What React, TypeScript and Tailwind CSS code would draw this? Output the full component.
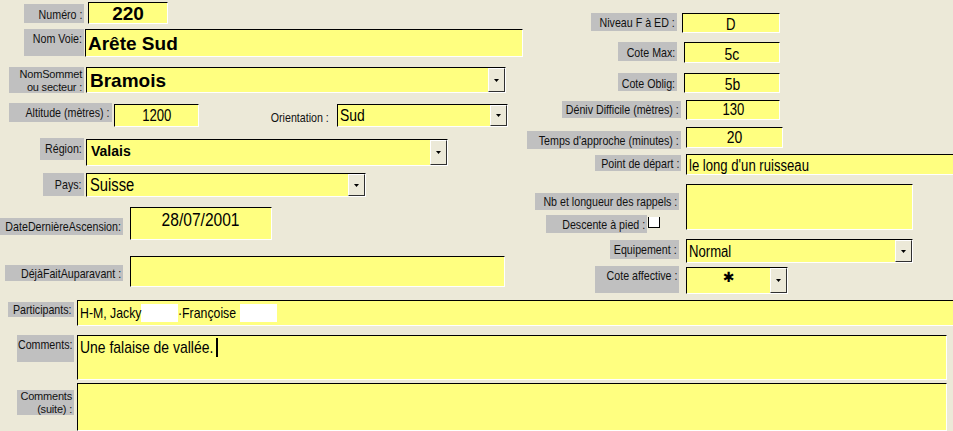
import React from "react";

const SANS = "font-['Liberation_Sans',Arial,sans-serif]";

function Label({ cls, children }: { cls: string; children: React.ReactNode }) {
  return (
    <div
      className={`shrink-0 flex justify-end items-start bg-[#C0C0C0] text-right text-[13px] leading-[13px] pr-[2px] text-[#111] whitespace-nowrap ${cls}`}
    >
      <span className="inline-block origin-right scale-x-[0.82]">{children}</span>
    </div>
  );
}

function Label2({ cls, children }: { cls: string; children: React.ReactNode }) {
  return (
    <div
      className={`shrink-0 bg-[#C0C0C0] text-right text-[11px] leading-[13px] pr-[2px] text-[#111] whitespace-nowrap tracking-[-0.2px] ${cls}`}
    >
      {children}
    </div>
  );
}

function DropBtn() {
  return (
    <div className="shrink-0 w-[17px] h-full bg-[#ECE9D8] border-t border-l border-t-white border-l-white border-r border-b border-r-[#303030] border-b-[#303030] flex items-center justify-center">
      <svg width="5" height="3" viewBox="0 0 5 3">
        <polygon points="0,0 5,0 2.5,3" fill="#000" />
      </svg>
    </div>
  );
}

function Box({
  cls,
  inner,
  combo,
  children,
}: {
  cls: string;
  inner?: string;
  combo?: boolean;
  children?: React.ReactNode;
}) {
  return (
    <div
      className={`shrink-0 flex bg-[#FFFF80] border-t border-l border-t-black border-l-black border-b border-r border-b-white border-r-white overflow-hidden ${cls}`}
    >
      <div className={`flex-1 min-w-0 flex whitespace-nowrap text-black ${inner ?? ""}`}>{children}</div>
      {combo && <DropBtn />}
    </div>
  );
}

function NL({ children }: { children: React.ReactNode }) {
  return <span className="inline-block origin-left scale-x-[0.82]">{children}</span>;
}

function NC({ children }: { children: React.ReactNode }) {
  return <span className="inline-block origin-center scale-x-[0.82]">{children}</span>;
}

export default function App() {
  return (
    <div className={`w-[953px] h-[431px] bg-[#ECE9D8] overflow-hidden flex flex-col ${SANS}`}>
      <div className="h-[296px] flex shrink-0">
        {/* LEFT COLUMN */}
        <div className="w-[525px] shrink-0 flex flex-col">
          <div className="h-[29px] flex items-start">
            <Label cls="ml-[24px] mt-[4px] w-[60px] h-[19px] pt-[4px]">Numéro :</Label>
            <Box cls="ml-[4px] mt-[2px] w-[80px] h-[22px]" inner="justify-center items-center font-bold text-[19px] leading-none">
              220
            </Box>
          </div>
          <div className="h-[38px] flex items-start">
            <Label cls="ml-[24px] w-[60px] h-[27px] pt-[3px] pr-[1px]">Nom Voie:</Label>
            <Box cls="ml-[1px] w-[438px] h-[28px]" inner="items-center pl-[2px] font-bold text-[19px] leading-none">
              Arête Sud
            </Box>
          </div>
          <div className="h-[36px] flex items-start">
            <Label2 cls="ml-[9px] w-[75px] h-[26px] pt-[1px]">
              NomSommet
              <br />
              ou secteur :
            </Label2>
            <Box combo cls="ml-[2px] w-[420px] h-[26px]" inner="items-center pl-[3px] font-bold text-[19px] leading-none">
              Bramois
            </Box>
          </div>
          <div className="h-[35px] flex items-start">
            <Label cls="ml-[9px] w-[103px] h-[19px] pt-[3px]">Altitude (mètres) :</Label>
            <Box cls="ml-[2px] mt-[1px] w-[85px] h-[23px]" inner="justify-center pt-[3px] text-[16px] leading-none">
              <NC>1200</NC>
            </Box>
            <div className="ml-[70px] mt-[8px] w-[60px] flex justify-end text-[13px] leading-[13px] text-[#111] whitespace-nowrap">
              <span className="inline-block origin-right scale-x-[0.82]">Orientation :</span>
            </div>
            <Box combo cls="ml-[8px] mt-[1px] w-[171px] h-[23px]" inner="pl-[2px] pt-[2px] text-[17px] leading-none">
              <NL>Sud</NL>
            </Box>
          </div>
          <div className="h-[35px] flex items-start">
            <Label cls="ml-[40px] w-[44px] h-[22px] pt-[4px]">Région:</Label>
            <Box combo cls="ml-[2px] mt-[1px] w-[362px] h-[27px]" inner="pl-[4px] pt-[4px] font-bold text-[14px] leading-none">
              Valais
            </Box>
          </div>
          <div className="h-[34px] flex items-start">
            <Label cls="ml-[43px] w-[41px] h-[23px] pt-[5px]">Pays:</Label>
            <Box combo cls="ml-[2px] w-[280px] h-[24px]" inner="pl-[3px] pt-[2px] text-[18px] leading-none">
              <NL>Suisse</NL>
            </Box>
          </div>
          <div className="h-[49px] flex items-start">
            <Label cls="mt-[11px] w-[123px] h-[17px] pt-[2px]">DateDernièreAscension:</Label>
            <Box cls="ml-[7px] w-[142px] h-[33px]" inner="justify-center pt-[2px] text-[19px] leading-none">
              <NC>28/07/2001</NC>
            </Box>
          </div>
          <div className="h-[40px] flex items-start">
            <Label cls="ml-[5px] mt-[9px] w-[118px] h-[16px] pt-[2px]">DéjàFaitAuparavant :</Label>
            <Box cls="ml-[7px] w-[375px] h-[31px]" />
          </div>
        </div>

        {/* RIGHT COLUMN */}
        <div className="flex-1 flex flex-col">
          <div className="h-[42px] flex items-start">
            <Label cls="ml-[66px] mt-[13px] w-[86px] h-[18px] pt-[3px]">Niveau F à ED :</Label>
            <Box cls="ml-[5px] mt-[13px] w-[98px] h-[20px]" inner="justify-center pt-[3px] text-[16px] leading-none">
              <NC>D</NC>
            </Box>
          </div>
          <div className="h-[31px] flex items-start">
            <Label cls="ml-[93px] w-[59px] h-[19px] pt-[4px]">Cote Max:</Label>
            <Box cls="ml-[7px] w-[96px] h-[21px]" inner="justify-center pt-[3px] text-[17px] leading-none">
              <NC>5c</NC>
            </Box>
          </div>
          <div className="h-[27px] flex items-start">
            <Label cls="ml-[93px] w-[59px] h-[18px] pt-[4px]">Cote Oblig:</Label>
            <Box cls="ml-[7px] w-[96px] h-[20px]" inner="justify-center pt-[2px] text-[17px] leading-none">
              <NC>5b</NC>
            </Box>
          </div>
          <div className="h-[26px] flex items-start">
            <Label cls="ml-[37px] mt-[1px] w-[119px] h-[17px] pt-[2px]">Déniv Difficile (mètres) :</Label>
            <Box cls="ml-[5px] w-[94px] h-[20px]" inner="justify-center pt-[1px] text-[16px] leading-none">
              <NC>130</NC>
            </Box>
          </div>
          <div className="h-[28px] flex items-start">
            <Label cls="ml-[2px] mt-[5px] w-[154px] h-[18px] pt-[3px]">Temps d&apos;approche (minutes) :</Label>
            <Box cls="ml-[5px] mt-[1px] w-[97px] h-[21px]" inner="justify-center pt-[1px] text-[17px] leading-none">
              <NC>20</NC>
            </Box>
          </div>
          <div className="h-[30px] flex items-start">
            <Label cls="ml-[70px] mt-[1px] w-[86px] h-[16px] pt-[2px]">Point de départ :</Label>
            <Box cls="ml-[5px] w-[272px] h-[21px]" inner="pl-[2px] pt-[3px] text-[16px] leading-none">
              <NL>le long d&apos;un ruisseau</NL>
            </Box>
          </div>
          <div className="h-[55px] flex items-start">
            <div className="w-[161px] shrink-0 flex flex-col">
              <Label cls="ml-[10px] mt-[9px] w-[144px] h-[17px] pt-[2px]">Nb et longueur des rappels :</Label>
              <div className="mt-[5px] flex items-start">
                <Label cls="ml-[21px] w-[101px] h-[18px] pt-[3px]">Descente à pied :</Label>
                <div className="ml-[1px] mt-[2px] w-[12px] h-[11px] bg-white border-l border-b border-r border-black" />
              </div>
            </div>
            <Box cls="w-[227px] h-[46px]" />
          </div>
          <div className="h-[27px] flex items-start">
            <Label cls="ml-[85px] mt-[1px] w-[69px] h-[19px] pt-[3px]">Equipement :</Label>
            <Box combo cls="ml-[7px] w-[227px] h-[24px]" inner="pl-[2px] pt-[4px] text-[16px] leading-none">
              <NL>Normal</NL>
            </Box>
          </div>
          <div className="h-[30px] flex items-start">
            <Label cls="ml-[70px] w-[84px] h-[27px] pt-[3px]">Cote affective :</Label>
            <Box combo cls="ml-[7px] mt-[1px] w-[102px] h-[27px]" inner="justify-center pt-[2px] text-[14px] leading-none font-['DejaVu_Sans',sans-serif]">
              ✱
            </Box>
          </div>
        </div>
      </div>

      {/* BOTTOM */}
      <div className="h-[39px] flex items-start shrink-0">
        <Label cls="ml-[8px] mt-[6px] w-[66px] h-[15px] pt-[1px]">Participants:</Label>
        <Box cls="ml-[3px] mt-[4px] w-[880px] h-[26px]" inner="pl-[2px] pt-[3px] text-[15px] leading-none">
          <span className="w-[61px] shrink-0 mt-[1px]">
            <NL>H-M, Jacky</NL>
          </span>
          <span className="w-[37px] h-[18px] shrink-0 bg-white" />
          <span className="w-[62px] shrink-0 mt-[1px]">
            <NL>·Françoise</NL>
          </span>
          <span className="w-[37px] h-[18px] shrink-0 bg-white" />
        </Box>
      </div>
      <div className="h-[48px] flex items-start shrink-0">
        <Label cls="ml-[17px] w-[57px] h-[27px] pt-[3px]">Comments:</Label>
        <Box cls="ml-[3px] w-[870px] h-[45px]" inner="pl-[2px] pt-[2px] text-[17px] leading-none items-start">
          <span className="w-[136px] shrink-0 mt-[1px]">
            <NL>Une falaise de vallée.</NL>
          </span>
          <span className="w-[2px] h-[19px] shrink-0 bg-black" />
        </Box>
      </div>
      <div className="h-[48px] flex items-start shrink-0">
        <Label2 cls="ml-[17px] mt-[7px] w-[57px] h-[25px]">
          Comments
          <br />
          (suite) :
        </Label2>
        <Box cls="ml-[3px] w-[870px] h-[48px]" />
      </div>
    </div>
  );
}
